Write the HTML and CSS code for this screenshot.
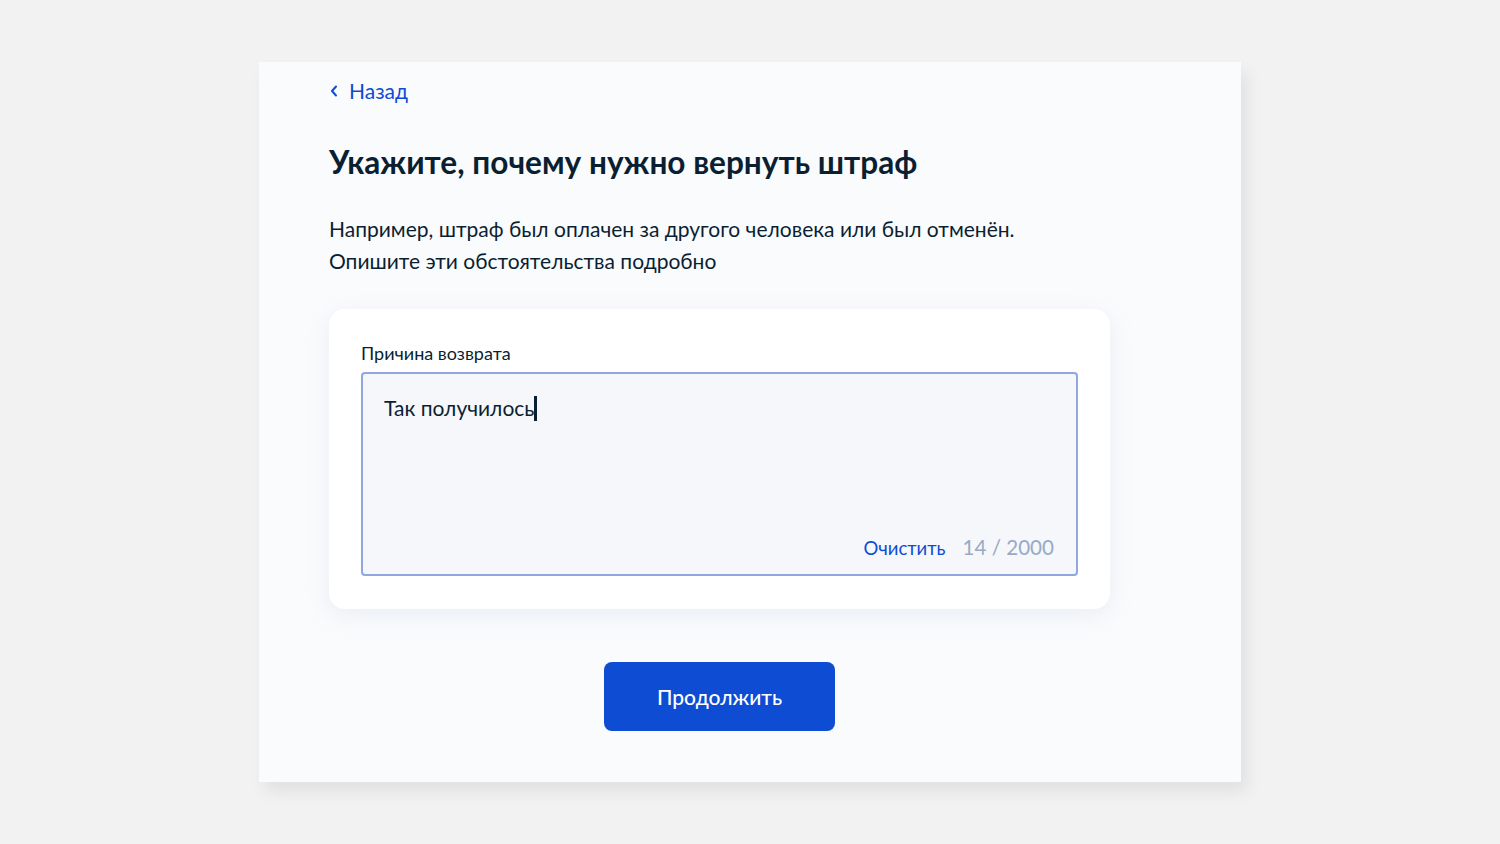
FILE: index.html
```html
<!DOCTYPE html>
<html lang="ru">
<head>
<meta charset="utf-8">
<title>Возврат штрафа</title>
<link rel="stylesheet" href="styles.css">
</head>
<body>
<main class="panel">
  <a class="back" href="#">
    <svg class="back-icon" width="10" height="14" viewBox="0 0 10 14"><path d="M7 2.5 L3 7 L7 11.5" fill="none" stroke="currentColor" stroke-width="2" stroke-linecap="round" stroke-linejoin="round"/></svg>
    <span>Назад</span>
  </a>
  <h1 class="title">Укажите, почему нужно вернуть штраф</h1>
  <p class="lead">Например, штраф был оплачен за другого человека или был отменён.<br>Опишите эти обстоятельства подробно</p>
  <section class="card">
    <label class="label">Причина возврата</label>
    <div class="field">
      <div class="field-text">Так получилось<span class="caret"></span></div>
      <div class="field-foot">
        <a class="clear" href="#">Очистить</a>
        <span class="counter">14 / 2000</span>
      </div>
    </div>
  </section>
  <div class="actions">
    <button class="btn">Продолжить</button>
  </div>
</main>
</body>
</html>
```

FILE: styles.css
```css
html, body {
  margin: 0;
  padding: 0;
}
body {
  background: #f2f2f2;
  font-family: Lato, "Noto Sans", sans-serif;
  color: #0b1f33;
  padding: 62px 259px;
  height: 844px;
  box-sizing: border-box;
}
.panel {
  background: #fafbfd;
  width: 982px;
  height: 720px;
  box-sizing: border-box;
  padding: 15px 70px 0 70px;
  box-shadow: 6px 10px 16px rgba(0, 0, 0, 0.07);
  display: flex;
  flex-direction: column;
}
.back {
  display: flex;
  align-items: center;
  gap: 10px;
  color: #0d4cd3;
  text-decoration: none;
  font-size: 21px;
  line-height: 28px;
  height: 28px;
}
.back-icon {
  display: block;
}
.title {
  margin: 39px 0 0;
  font-size: 31.6px;
  line-height: 36px;
  font-weight: 700;
}
.lead {
  margin: 33px 0 0;
  font-size: 21px;
  line-height: 32px;
}
.card {
  margin-top: 32px;
  width: 781px;
  height: 300px;
  box-sizing: border-box;
  background: #fff;
  border-radius: 16px;
  box-shadow: 0 6px 24px rgba(150, 165, 190, 0.16);
  padding: 32px 32px 0 32px;
}
.label {
  display: block;
  font-size: 18px;
  line-height: 24px;
}
.field {
  margin-top: 7px;
  height: 204px;
  box-sizing: border-box;
  border: 2px solid #8fa8e0;
  border-radius: 4px;
  background: #f5f7fa;
  padding: 19px 22px 15px 21px;
  display: flex;
  flex-direction: column;
  justify-content: space-between;
}
.field-text {
  font-size: 21px;
  line-height: 30px;
  display: flex;
  align-items: center;
}
.caret {
  display: inline-block;
  width: 3px;
  height: 25px;
  background: #0b1f33;
}
.field-foot {
  display: flex;
  justify-content: flex-end;
  align-items: baseline;
  gap: 17px;
}
.clear {
  color: #0d4cd3;
  text-decoration: none;
  font-size: 18.5px;
}
.counter {
  color: #9aa9c6;
  font-size: 20.6px;
}
.actions {
  display: flex;
  justify-content: center;
  margin-top: 53px;
  padding-right: 61px;
}
.btn {
  width: 231px;
  height: 69px;
  border: 0;
  border-radius: 8px;
  background: #0d4cd3;
  color: #fff;
  font-family: Lato, "Noto Sans", sans-serif;
  font-size: 21px;
  font-weight: 500;
  cursor: pointer;
}
```
